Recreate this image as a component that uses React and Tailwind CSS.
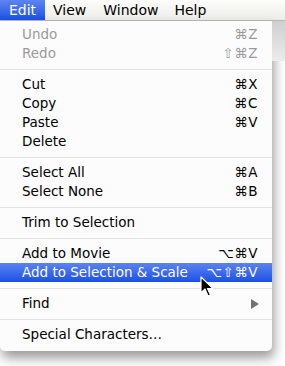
import React from "react";

const font = { fontFamily: '"DejaVu Sans", "Lucida Grande", sans-serif' };

function Item({ label, sc, disabled, active, arrow }) {
  return (
    <div
      className={`flex h-[19px] items-center justify-between pl-[22px] pr-[14px] text-[13.5px] leading-none ${
        active
          ? "bg-gradient-to-b from-[#5b82f0] to-[#1c4fe6] text-white"
          : disabled
          ? "text-[#9a9a9a]"
          : "text-black"
      }`}
    >
      <span>{label}</span>
      {arrow ? (
        <svg width="8" height="10" viewBox="0 0 8 10" className="mr-[-1px]">
          <path d="M0 0 L8 5 L0 10 Z" fill="#737373" />
        </svg>
      ) : (
        <span className="tracking-[0.5px]">{sc}</span>
      )}
    </div>
  );
}

function Sep() {
  return (
    <div className="flex h-[12px] items-center">
      <div className="h-px w-full bg-[#e2e2e2]" />
    </div>
  );
}

export default function App() {
  return (
    <div className="relative h-[366px] w-[285px] overflow-hidden bg-white" style={font}>
      {/* menu bar */}
      <div className="flex h-[21px] items-stretch border-b border-[#b9b9b9] bg-gradient-to-b from-[#fdfdfb] to-[#ecece8] text-[14px] text-black">
        <div className="flex w-[45px] items-center justify-center bg-gradient-to-b from-[#5d85f2] to-[#1a4fe6] text-white">
          Edit
        </div>
        <div className="flex items-center pl-[8px]">View</div>
        <div className="flex items-center pl-[17px]">Window</div>
        <div className="flex items-center pl-[16px]">Help</div>
      </div>
      <div className="flex">
        {/* menu */}
        <div className="w-[272px] rounded-b-[5px] bg-[#fcfcfc] pt-[4px] pb-[7px] shadow-[2px_7px_12px_rgba(0,0,0,0.4)]">
          <Item label="Undo" sc="⌘Z" disabled />
          <Item label="Redo" sc="⇧⌘Z" disabled />
          <Sep />
          <Item label="Cut" sc="⌘X" />
          <Item label="Copy" sc="⌘C" />
          <Item label="Paste" sc="⌘V" />
          <Item label="Delete" />
          <Sep />
          <Item label="Select All" sc="⌘A" />
          <Item label="Select None" sc="⌘B" />
          <Sep />
          <Item label="Trim to Selection" />
          <Sep />
          <Item label="Add to Movie" sc="⌥⌘V" />
          <Item label="Add to Selection & Scale" sc="⌥⇧⌘V" active />
          <Sep />
          <Item label="Find" arrow />
          <Sep />
          <Item label="Special Characters…" />
        </div>
        <div className="flex-1">
          <div className="h-[40px] bg-gradient-to-b from-[#cfcfcf] to-[#ececec]" />
        </div>
      </div>
      {/* cursor */}
      <svg
        className="absolute left-[200px] top-[276px]"
        width="16"
        height="24"
        viewBox="0 0 16 24"
      >
        <path
          d="M1 1 L1 17 L5 13 L8 20 L10.5 19 L7.5 12.5 L13 12.5 Z"
          fill="#000"
          stroke="#fff"
          strokeWidth="1.2"
          strokeLinejoin="round"
        />
      </svg>
    </div>
  );
}
